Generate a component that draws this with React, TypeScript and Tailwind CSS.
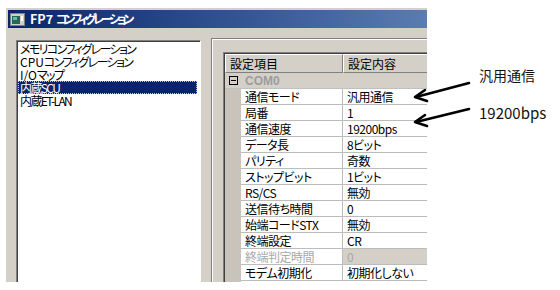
import React from 'react';

const JP = "font-['Noto_Sans_CJK_JP',sans-serif] [font-feature-settings:'palt']";

interface Row {
  name: string;
  value: string;
  disabled?: boolean;
}

const rows: Row[] = [
  { name: '通信モード', value: '汎用通信' },
  { name: '局番', value: '1' },
  { name: '通信速度', value: '19200bps' },
  { name: 'データ長', value: '8ビット' },
  { name: 'パリティ', value: '奇数' },
  { name: 'ストップビット', value: '1ビット' },
  { name: 'RS/CS', value: '無効' },
  { name: '送信待ち時間', value: '0' },
  { name: '始端コードSTX', value: '無効' },
  { name: '終端設定', value: 'CR' },
  { name: '終端判定時間', value: '0', disabled: true },
  { name: 'モデム初期化', value: '初期化しない' },
];

// [latin prefix, kana/kanji rest]
const menu: [string, string][] = [
  ['', 'メモリコンフィグレーション'],
  ['CPU', 'コンフィグレーション'],
  ['I/O', 'マップ'],
  ['', '内蔵SCU'],
  ['', '内蔵ET-LAN'],
];

const App: React.FC = () => {
  return (
    <div className={`relative w-[560px] h-[290px] bg-white overflow-hidden ${JP}`}>
      {/* Window */}
      <div className="ml-[6px] mt-[8px] w-[421px] h-[274px] bg-[#d4d0c8] pt-[2px] flex flex-col overflow-hidden">
        {/* Title bar */}
        <div className="ml-[2px] h-[18px] flex items-center gap-[5px] pl-[2px] bg-gradient-to-r from-[#0a246a] to-[#5a7cb2]">
          <svg width="15" height="13" viewBox="0 0 15 13">
            <rect x="0.5" y="0.5" width="14" height="12" fill="#d4d0c8" stroke="#808080" />
            <rect x="2" y="3" width="8" height="8" fill="#1f6a5a" />
            <rect x="3" y="4" width="4" height="3" fill="#6fb89a" />
            <rect x="11" y="3" width="2" height="5" fill="#ffffff" />
          </svg>
          <span className="text-white text-[12.5px] font-bold leading-none">
            FP7 <span className="text-[12px] tracking-[-3.3px]">コンフィグレーション</span>
          </span>
        </div>

        {/* Body */}
        <div className="flex flex-1 pl-[10px]">
          {/* Menu list */}
          <div className="mt-[12px] w-[185px] bg-white border-t border-l border-[#808080] border-r border-r-white shadow-[inset_1px_1px_0_#404040] pl-[1px] pt-[1px]">
            {menu.map(([pre, rest], i) => (
              <div
                key={pre + rest}
                className={`h-[13px] leading-[13px] text-[12px] pl-[2px] mr-[3px] whitespace-nowrap ${
                  i === 3
                    ? 'bg-[#0a246a] text-white outline-1 outline-dotted outline-[#e8c860] -outline-offset-1'
                    : 'text-black'
                }`}
              >
                {pre}
                <span className="tracking-[-1.6px]">{rest}</span>
              </div>
            ))}
          </div>

          {/* Group box */}
          <div className="ml-[10px] mt-[10px] flex-1 border-t border-l border-[#808080] shadow-[inset_1px_1px_0_#ffffff] pl-[11px] pt-[13px]">
            <div className="h-full bg-white border-t border-l border-[#808080] shadow-[inset_1px_1px_0_#404040] pl-[1px] pt-[1px] flex flex-col">
              {/* Header */}
              <div className="flex h-[19px] text-[12px] text-black">
                <div className="w-[118px] bg-[#d4d0c8] border-t border-l border-white border-r border-b border-r-[#808080] border-b-[#808080] flex items-center pl-[4px]">
                  設定項目
                </div>
                <div className="flex-1 bg-[#d4d0c8] border-t border-l border-white border-b border-b-[#808080] flex items-center pl-[4px]">
                  設定内容
                </div>
              </div>

              {/* COM0 group row */}
              <div className="flex h-[16px] items-center bg-[#d4d0c8] border-b border-[#c0c0c0]">
                <div className="w-[16px] flex justify-center">
                  <div className="w-[9px] h-[9px] border border-black flex items-center justify-center bg-[#d4d0c8]">
                    <div className="w-[5px] h-px bg-black" />
                  </div>
                </div>
                <span className="ml-[4px] text-[12px] font-bold text-[#9c9c9c] font-['Liberation_Sans',sans-serif]">COM0</span>
              </div>

              {/* Data rows */}
              {rows.map((r) => (
                <div key={r.name} className="flex h-[16px] text-[12px] tracking-[-0.5px]">
                  <div className="w-[16px] bg-[#c8c4bc]" />
                  <div
                    className={`w-[102px] border-b border-r border-[#bcbcbc] flex items-center pl-[4px] whitespace-nowrap ${
                      r.disabled ? 'text-[#a8a8a8]' : 'text-black'
                    }`}
                  >
                    {r.name}
                  </div>
                  <div
                    className={`flex-1 border-b border-[#bcbcbc] flex items-center pl-[4px] whitespace-nowrap ${
                      r.disabled ? 'bg-[#d4d0c8] text-[#a8a8a8]' : 'text-black'
                    }`}
                  >
                    {r.value}
                  </div>
                </div>
              ))}
              <div className="flex-1 flex">
                <div className="w-[16px] bg-[#c8c4bc]" />
              </div>
            </div>
          </div>
        </div>
      </div>

      {/* Annotations */}
      <div className="absolute left-[479px] top-[65px] text-[14px] leading-[20px] text-[#111]">汎用通信</div>
      <div className="absolute left-[479px] top-[102px] text-[15px] leading-[22px] text-[#111]">19200bps</div>
      <svg className="absolute left-0 top-0 pointer-events-none" width="560" height="290" viewBox="0 0 560 290">
        <g fill="none" stroke="#000" strokeWidth="2.6" strokeLinecap="round" strokeLinejoin="round">
          <path d="M469 83 L416 97" />
          <path d="M425 90 L415 97 L427 101" />
          <path d="M469 109 L416 122" />
          <path d="M425 115 L415 122 L427 126" />
        </g>
      </svg>
    </div>
  );
};

export default App;
